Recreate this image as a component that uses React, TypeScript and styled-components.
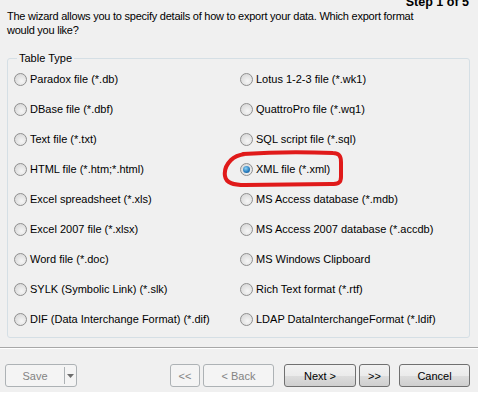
import styled, {createGlobalStyle} from "styled-components";

const GlobalStyle = createGlobalStyle`
    html, body {
        margin: 0;
        padding: 0;
        background: #f0f0f0;
    }
    body {
        font-family: "Liberation Sans", Arial, sans-serif;
        font-size: 11px;
        color: #000;
    }
`

type FormatType = {
    label: string,
    checked?: boolean,
    marked?: boolean,
}

const formats: FormatType[] = [
    {label: "Paradox file (*.db)"},
    {label: "Lotus 1-2-3 file (*.wk1)"},
    {label: "DBase file (*.dbf)"},
    {label: "QuattroPro file (*.wq1)"},
    {label: "Text file (*.txt)"},
    {label: "SQL script file (*.sql)"},
    {label: "HTML file (*.htm;*.html)"},
    {label: "XML file (*.xml)", checked: true, marked: true},
    {label: "Excel spreadsheet (*.xls)"},
    {label: "MS Access database (*.mdb)"},
    {label: "Excel 2007 file (*.xlsx)"},
    {label: "MS Access 2007 database (*.accdb)"},
    {label: "Word file (*.doc)"},
    {label: "MS Windows Clipboard"},
    {label: "SYLK (Symbolic Link) (*.slk)"},
    {label: "Rich Text format (*.rtf)"},
    {label: "DIF (Data Interchange Format) (*.dif)"},
    {label: "LDAP DataInterchangeFormat (*.ldif)"},
]

const RedMark = () => (
    <MarkSvg width="124" height="38" viewBox="0 0 124 38">
        <path
            d="M22 4 C50 2 90 2 112 3 C118 3 120 6 120 12 L120 27 C120 33 117 34 110 34 L24 35 C12 35 5 33 4 26 C3 20 6 14 10 10 C13 7 17 5 24 4"
            fill="none"
            stroke="#e01a1a"
            strokeWidth="4"
            strokeLinecap="round"
            strokeLinejoin="round"
        />
    </MarkSvg>
)

export default function App() {
    return (
        <Page>
            <GlobalStyle/>
            <StepTitle>Step 1 of 5</StepTitle>
            <Intro>
                The wizard allows you to specify details of how to export your data. Which export format
                <br/>
                would you like?
            </Intro>
            <GroupBox>
                <legend>Table Type</legend>
                <OptionGrid>
                    {formats.map((f) => (
                        <Option key={f.label}>
                            <Radio $checked={!!f.checked}/>
                            <span>{f.label}</span>
                            {f.marked && <RedMark/>}
                        </Option>
                    ))}
                </OptionGrid>
            </GroupBox>
            <Separator/>
            <ButtonBar>
                <SplitButton>
                    <span className="main">Save</span>
                    <span className="arrow">
                        <svg width="7" height="4" viewBox="0 0 7 4">
                            <path d="M0 0 H7 L3.5 4 Z" fill="#6d6d6d"/>
                        </svg>
                    </span>
                </SplitButton>
                <Spacer/>
                <Button $width={30} $disabled>&lt;&lt;</Button>
                <Button $width={71} $disabled $gap={3}>&lt; Back</Button>
                <Button $width={72} $gap={10}>Next &gt;</Button>
                <Button $width={31} $gap={3}>&gt;&gt;</Button>
                <Button $width={71} $gap={9}>Cancel</Button>
            </ButtonBar>
            <BottomStrip/>
        </Page>
    );
}

const Page = styled.div`
    width: 478px;
    height: 399px;
    overflow: hidden;
    display: flex;
    flex-direction: column;
    background: #f0f0f0;
`

const StepTitle = styled.div`
    height: 8px;
    margin-top: -5px;
    padding-right: 9px;
    text-align: right;
    font-weight: 700;
    font-size: 12.5px;
    line-height: 14px;
`

const Intro = styled.p`
    margin: 6px 0 0;
    padding: 0 7px;
    line-height: 14px;
    letter-spacing: -0.24px;
    white-space: nowrap;
`

const GroupBox = styled.fieldset`
    margin: 14px 8px 0 7px;
    padding: 0 0 3px 6px;
    border: 1px solid #d5dfe5;
    border-radius: 3px;
    min-width: 0;

    legend {
        padding: 0 2px;
        margin-left: 3px;
        line-height: 14px;
    }
`

const OptionGrid = styled.div`
    display: grid;
    grid-template-columns: 226px 1fr;
    grid-auto-rows: 30px;
    margin-top: -1px;
`

const Option = styled.label`
    position: relative;
    display: flex;
    align-items: center;
    gap: 3px;
    white-space: nowrap;
`

const Radio = styled.span<{ $checked: boolean }>`
    position: relative;
    width: 11px;
    height: 11px;
    border-radius: 50%;
    border: 1px solid #8f8f8f;
    background: radial-gradient(circle at 60% 65%, #f6f6f6 0%, #dcdcdc 70%, #cfcfcf 100%);
    flex-shrink: 0;

    &::after {
        content: "";
        display: ${(p) => (p.$checked ? "block" : "none")};
        position: absolute;
        left: 2px;
        top: 2px;
        width: 7px;
        height: 7px;
        border-radius: 50%;
        background: radial-gradient(circle at 40% 35%, #8fd3f5 0%, #2a7fc0 55%, #104a85 100%);
    }
`

const MarkSvg = styled.svg`
    position: absolute;
    left: -19px;
    top: -4px;
    pointer-events: none;
`

const Separator = styled.div`
    margin-top: 9px;
    height: 1px;
    background: #a8a8a8;
    border-bottom: 1px solid #ffffff;
`

const ButtonBar = styled.div`
    display: flex;
    align-items: center;
    height: 23px;
    margin-top: 15px;
    padding: 0 8px 0 5px;
`

const Spacer = styled.div`
    flex: 1;
`

const Button = styled.div<{ $width: number, $disabled?: boolean, $gap?: number }>`
    box-sizing: border-box;
    width: ${(p) => p.$width}px;
    height: 23px;
    margin-left: ${(p) => p.$gap ?? 0}px;
    display: flex;
    align-items: center;
    justify-content: center;
    border-radius: 3px;
    border: 1px solid ${(p) => (p.$disabled ? "#adb2b5" : "#707070")};
    background: ${(p) => (p.$disabled
            ? "#f4f4f4"
            : "linear-gradient(#f2f2f2 0%, #ebebeb 50%, #dddddd 51%, #cfcfcf 100%)")};
    color: ${(p) => (p.$disabled ? "#838383" : "#000")};
`

const SplitButton = styled.div`
    box-sizing: border-box;
    width: 72px;
    height: 23px;
    display: flex;
    border-radius: 3px;
    border: 1px solid #adb2b5;
    background: #f4f4f4;
    color: #838383;

    .main {
        flex: 1;
        display: flex;
        align-items: center;
        justify-content: center;
    }

    .arrow {
        width: 11px;
        display: flex;
        align-items: center;
        justify-content: center;
        border-left: 1px solid #adb2b5;
        margin: 2px 0;
    }
`

const BottomStrip = styled.div`
    margin-top: auto;
    height: 7px;
    background: #ffffff;
`
